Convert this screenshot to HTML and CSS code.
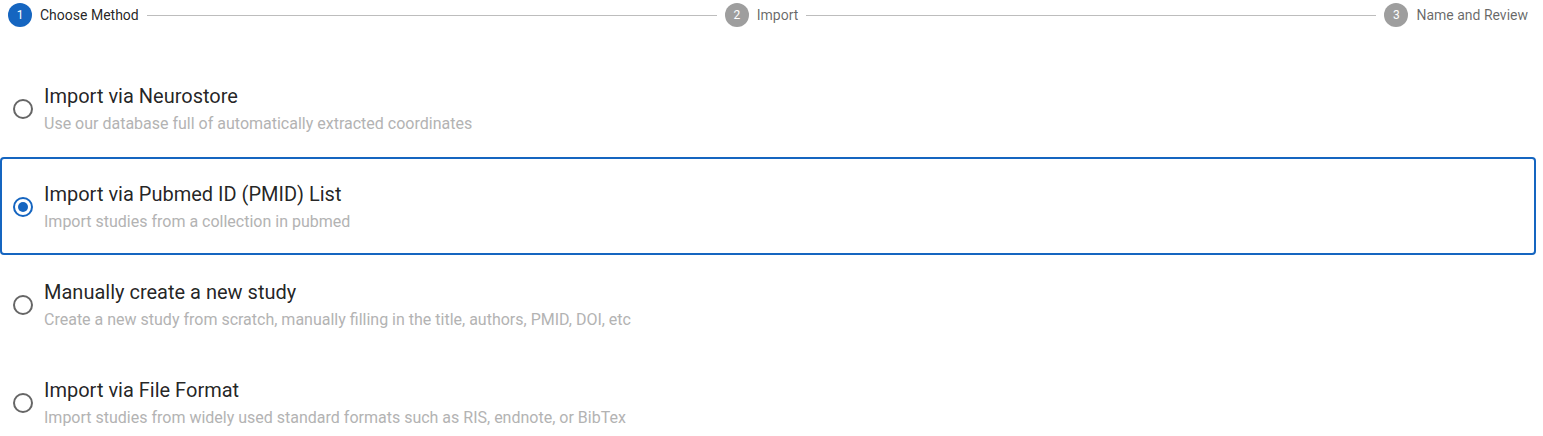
FILE: index.html
```html
<!DOCTYPE html>
<html>
<head>
<meta charset="utf-8">
<link rel="stylesheet" href="styles.css">
</head>
<body>
<div class="page">
  <div class="stepper">
    <div class="step active">
      <span class="step-icon">1</span>
      <span class="step-label">Choose Method</span>
    </div>
    <div class="connector"></div>
    <div class="step">
      <span class="step-icon">2</span>
      <span class="step-label">Import</span>
    </div>
    <div class="connector"></div>
    <div class="step">
      <span class="step-icon">3</span>
      <span class="step-label">Name and Review</span>
    </div>
  </div>

  <div class="options">
    <label class="option">
      <span class="radio"><span class="ring"></span></span>
      <span class="option-text">
        <span class="option-title">Import via Neurostore</span>
        <span class="option-desc">Use our database full of automatically extracted coordinates</span>
      </span>
    </label>
    <label class="option selected">
      <span class="radio"><span class="ring"><span class="dot"></span></span></span>
      <span class="option-text">
        <span class="option-title">Import via Pubmed ID (PMID) List</span>
        <span class="option-desc">Import studies from a collection in pubmed</span>
      </span>
    </label>
    <label class="option">
      <span class="radio"><span class="ring"></span></span>
      <span class="option-text">
        <span class="option-title">Manually create a new study</span>
        <span class="option-desc">Create a new study from scratch, manually filling in the title, authors, PMID, DOI, etc</span>
      </span>
    </label>
    <label class="option">
      <span class="radio"><span class="ring"></span></span>
      <span class="option-text">
        <span class="option-title">Import via File Format</span>
        <span class="option-desc">Import studies from widely used standard formats such as RIS, endnote, or BibTex</span>
      </span>
    </label>
  </div>
</div>
</body>
</html>
```

FILE: styles.css
```css
* { box-sizing: border-box; }
html, body { margin: 0; padding: 0; background: #fff; }
body {
  font-family: Roboto, "Liberation Sans", sans-serif;
  color: rgba(0,0,0,0.87);
  overflow: hidden;
}
.page { width: 1536px; }

.stepper {
  display: flex;
  align-items: center;
  height: 30px;
}
.step {
  display: flex;
  align-items: center;
  padding: 0 8px;
}
.step-icon {
  width: 24px;
  height: 24px;
  border-radius: 50%;
  background: #9e9e9e;
  color: #fff;
  font-size: 12px;
  display: flex;
  align-items: center;
  justify-content: center;
}
.step.active .step-icon { background: #1565c0; }
.step-label {
  padding-left: 8px;
  font-size: 14px;
  color: rgba(0,0,0,0.6);
}
.step.active .step-label { color: rgba(0,0,0,0.87); }
.connector {
  flex: 1;
  border-top: 1px solid #bdbdbd;
}

.options {
  margin-top: 29px;
  display: flex;
  flex-direction: column;
}
.option {
  display: flex;
  align-items: center;
  height: 98px;
  border: 2px solid transparent;
  border-radius: 4px;
  cursor: pointer;
}
.option.selected { border-color: #1565c0; }
.radio {
  width: 42px;
  height: 42px;
  padding: 9px;
  display: flex;
  align-items: center;
  justify-content: center;
  margin-top: 2px;
  flex: none;
}
.ring {
  width: 20px;
  height: 20px;
  border: 2px solid #666;
  border-radius: 50%;
  display: flex;
  align-items: center;
  justify-content: center;
}
.option.selected .ring { border-color: #1565c0; }
.dot {
  width: 10px;
  height: 10px;
  border-radius: 50%;
  background: #1565c0;
}
.option-text {
  display: flex;
  flex-direction: column;
}
.option-title {
  font-size: 20px;
  line-height: 32px;
  color: rgba(0,0,0,0.87);
}
.option-desc {
  font-size: 16px;
  line-height: 24px;
  color: #b3b3b3;
}
```
